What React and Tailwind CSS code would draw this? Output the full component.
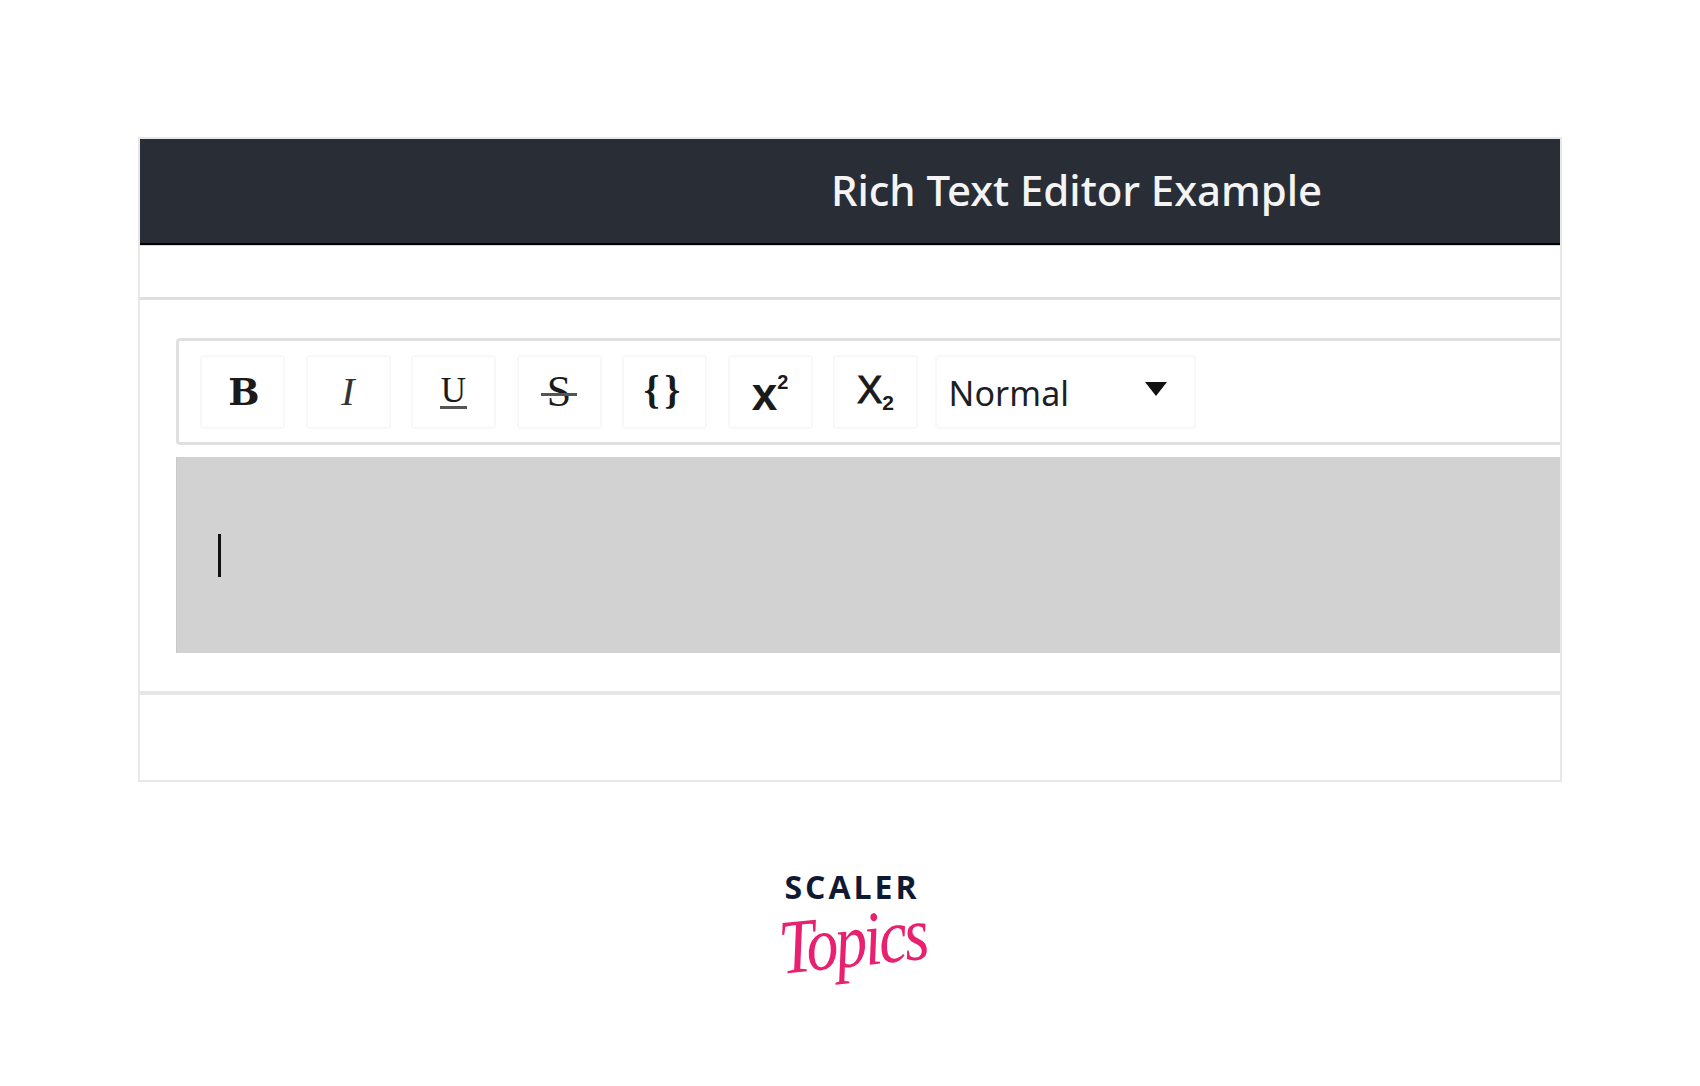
const ToolButton = ({ children, className = '' }) => (
  <button className={`w-[85px] h-[74px] shrink-0 flex items-center justify-center bg-white border-2 border-[#f8f8f8] rounded-sm text-[#1a1a1a] ${className}`}>
    {children}
  </button>
);

export default function App() {
  return (
    <div className="h-[1086px] bg-white pt-[137px] pl-[138px] overflow-hidden font-['Liberation_Sans',sans-serif]">
      <div className="w-[1424px] border-2 border-[#e8e8e8]">
        <header className="h-[106px] bg-[#282d36] border-b-2 border-black flex items-center pl-[691px]">
          <h1 className="text-[#f4f4f4] text-[42px] font-medium leading-none tracking-[-0.05px] font-['Noto_Sans',sans-serif] pb-[3px] whitespace-nowrap">Rich Text Editor Example</h1>
        </header>

        <div className="h-[55px] border-t border-[#d8d8d8] border-b-[3px] border-b-[#dedede]" />

        <main className="pt-[38px] pl-[36px] pb-[38px] border-b-4 border-[#e6e6e6]">
          <div className="h-[107px] border-y-[3px] border-l-[3px] border-[#e0e0e0] rounded-l-sm bg-white pl-[21px] flex items-center">
            <div className="flex items-center gap-[20.5px]">
              <ToolButton className="font-['DejaVu_Serif',serif] font-bold text-[37px]">
                <span className="mt-[3px] ml-[3px]">B</span>
              </ToolButton>
              <ToolButton className="font-['Liberation_Serif',serif] italic text-[40px] !text-[#333]">I</ToolButton>
              <ToolButton className="font-['Liberation_Serif',serif] text-[35px]">
                <span className="border-b-[3px] border-[#555] leading-[31px] px-[1px]">U</span>
              </ToolButton>
              <ToolButton className="font-['Liberation_Serif',serif] text-[44px]">
                <span className="relative leading-none">
                  S
                  <span className="absolute left-[-6px] right-[-6px] top-[23px] h-[3px] bg-[#555]" />
                </span>
              </ToolButton>
              <ToolButton className="font-['Liberation_Serif',serif] font-bold text-[40px] tracking-[5px]">
                <span className="pb-[4px]">{'{}'}</span>
              </ToolButton>
              <ToolButton className="text-[46px] font-bold font-['Liberation_Sans',sans-serif]">
                <span className="leading-none mt-[4px]">x</span>
                <span className="text-[20px] leading-none mb-[20px] font-bold">2</span>
              </ToolButton>
              <ToolButton className="text-[38px] font-['Liberation_Sans',sans-serif]">
                <span className="leading-none mb-[4px] [-webkit-text-stroke:1px_#1a1a1a]">X</span>
                <span className="text-[21px] leading-none mt-[22px] font-bold">2</span>
              </ToolButton>
              <div className="w-[261px] h-[74px] -ml-[4px] bg-white border-2 border-[#f8f8f8] rounded-sm flex items-center justify-between pl-[12px] pr-[27px]">
                <span className="text-[34px] leading-none text-[#1c1f26] font-['Noto_Sans',sans-serif] tracking-[0.1px] pt-[3px]">Normal</span>
                <svg width="22" height="14" viewBox="0 0 22 14" className="mb-[6px]">
                  <path d="M0 0H22L11 14Z" fill="#111" />
                </svg>
              </div>
            </div>
          </div>

          <div className="mt-[12px] h-[196px] bg-[#d2d2d2] border-l border-[#c8c8c8] pl-[41px] flex items-center">
            <div className="w-[3px] h-[43px] bg-[#111]" />
          </div>
        </main>

        <div className="h-[85px]" />
      </div>

      <div className="w-[150px] ml-[639px] mt-[88px] flex flex-col items-center">
        <div className="text-[#0f1a32] text-[32px] leading-[34px] font-bold tracking-[3px] font-['Open_Sans',sans-serif] whitespace-nowrap">SCALER</div>
        <div className="text-[#e8206f] text-[64px] leading-[70px] italic font-['Liberation_Serif',serif] -rotate-6 scale-y-[1.2] mt-[2px] whitespace-nowrap tracking-[-3px]">Topics</div>
      </div>
    </div>
  );
}
